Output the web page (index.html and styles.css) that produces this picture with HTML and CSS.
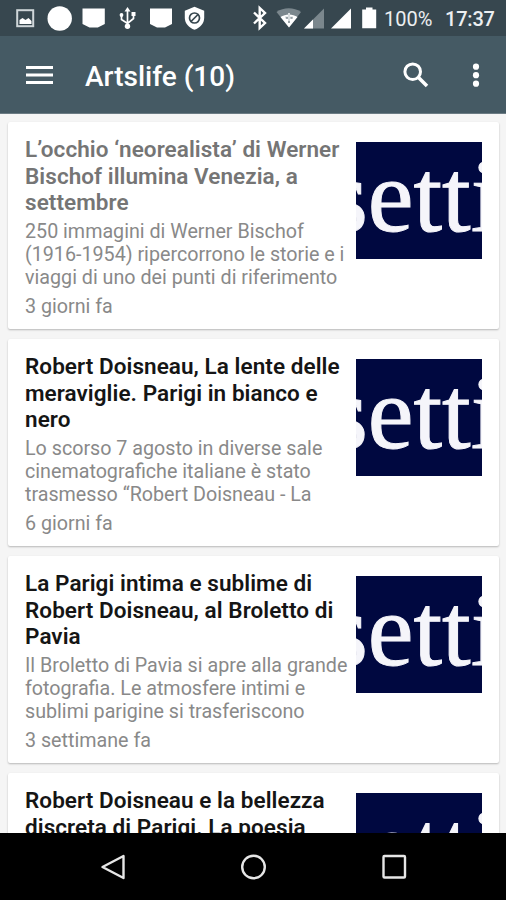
FILE: index.html
```html
<!DOCTYPE html>
<html lang="it">

<head>
    <meta charset="UTF-8">
    <meta name="viewport" content="width=device-width, initial-scale=1.0">
    <title>Artslife</title>
    <link rel="stylesheet" href="styles.css">
</head>

<body>
    <div class="screen">
        <div class="status-bar">
            <svg width="253" height="36" viewBox="0 0 253 36">
                <rect x="17.2" y="10.2" width="16" height="16" fill="none" stroke="#cfd6d9" stroke-width="2"/>
                <path d="M19.500 24v-4l3-2 3 2 3-2 3 3v3z" fill="#fff"/>
                <circle cx="59.700" cy="18.500" r="12.200" fill="#fff"/>
                <path d="M82.500 8.500h22.300v15.500l-7 3.500h-8.300l-7-3.500z" fill="#fff"/>
                <path d="M127.500 9v18M121.500 15v4.500l6 4 6-5V14" fill="none" stroke="#fff" stroke-width="1.700"/>
                <path d="M124.500 11.500l3-4.500 3 4.500z" fill="#fff"/>
                <circle cx="121.500" cy="15" r="1.900" fill="#fff"/>
                <path d="M131.500 12h4v4h-4z" fill="#fff"/>
                <circle cx="127.500" cy="26.300" r="2.700" fill="#fff"/>
                <path d="M150 8.500h22v15.500l-7 3.500h-8l-7-3.500z" fill="#fff"/>
                <path d="M194.500 6.800l9.700 4v7c0 5.500-4 10-9.700 12-5.700-2-9.700-6.500-9.700-12v-7z" fill="#fff"/>
                <circle cx="194.500" cy="18" r="5" fill="none" stroke="#37474f" stroke-width="1.700"/>
                <path d="M191 21.500l7-7" stroke="#37474f" stroke-width="1.700"/>
            </svg>
            <svg width="124" height="36" viewBox="253 0 124 36">
                <path d="M254 12.500l11 10.500-5.300 5V8l5.300 5-11 10.500" fill="none" stroke="#fff" stroke-width="2.400"/>
                <path d="M276.500 12c7-5 17.500-5 24.500 0L289 27.500z" fill="#7b878d"/>
                <path d="M280.500 17c5-3.500 12-3.500 17 0L289 27.500z" fill="#fff"/>
                <path d="M289 13v8M285 17.500h8" stroke="#d7dcde" stroke-width="2"/>
                <path d="M286 18h2M290.500 18h2M289 21v2" stroke="#59676e" stroke-width="1.200"/>
                <path d="M324 8.500v20h-20z" fill="#7b878d"/>
                <path d="M313 19.500v9h-9z" fill="#fff"/>
                <path d="M351 8.500v20h-20z" fill="#fff"/>
                <path d="M366 7.500h6.500v2h3.700v18.700h-14V9.500h3.800z" fill="#fff"/>
            </svg>
            <span class="battery">100%</span>
            <span class="clock">17:37</span>
        </div>

        <header class="toolbar">
            <svg class="menu" width="27" height="20" viewBox="0 0 27 20">
                <path d="M0 2.500h27M0 10h27M0 17.500h27" stroke="#fff" stroke-width="3.200"/>
            </svg>
            <h1>Artslife (10)</h1>
            <svg class="search" width="26" height="26" viewBox="0 0 26 26">
                <circle cx="9.700" cy="9.700" r="7.800" fill="none" stroke="#fff" stroke-width="3"/>
                <path d="M15.500 15.500l8.500 8.500" stroke="#fff" stroke-width="3.600"/>
            </svg>
            <svg class="more" width="8" height="26" viewBox="0 0 8 26">
                <circle cx="4" cy="4.700" r="3.100" fill="#fff"/>
                <circle cx="4" cy="13.200" r="3.100" fill="#fff"/>
                <circle cx="4" cy="21.700" r="3.100" fill="#fff"/>
            </svg>
        </header>

        <main class="list">
            <article class="card read">
                <div class="text">
                    <h2>L’occhio ‘neorealista’ di Werner<br>Bischof illumina Venezia, a<br>settembre</h2>
                    <p class="excerpt">250 immagini di Werner Bischof<br>(1916-1954) ripercorrono le storie e i<br>viaggi di uno dei punti di riferimento</p>
                    <p class="time">3 giorni fa</p>
                </div>
                <div class="thumb"><span>setti</span></div>
            </article>

            <article class="card">
                <div class="text">
                    <h2>Robert Doisneau, La lente delle<br>meraviglie. Parigi in bianco e<br>nero</h2>
                    <p class="excerpt">Lo scorso 7 agosto in diverse sale<br>cinematografiche italiane è stato<br>trasmesso “Robert Doisneau - La</p>
                    <p class="time">6 giorni fa</p>
                </div>
                <div class="thumb"><span>setti</span></div>
            </article>

            <article class="card">
                <div class="text">
                    <h2>La Parigi intima e sublime di<br>Robert Doisneau, al Broletto di<br>Pavia</h2>
                    <p class="excerpt">Il Broletto di Pavia si apre alla grande<br>fotografia. Le atmosfere intimi e<br>sublimi parigine si trasferiscono</p>
                    <p class="time">3 settimane fa</p>
                </div>
                <div class="thumb"><span>setti</span></div>
            </article>

            <article class="card">
                <div class="text">
                    <h2>Robert Doisneau e la bellezza<br>discreta di Parigi. La poesia</h2>
                </div>
                <div class="thumb"><span>setti</span></div>
            </article>
        </main>

        <nav class="nav-bar">
            <svg width="26" height="28" viewBox="0 0 26 28">
                <path d="M23.500 3v22L2.500 14z" fill="none" stroke="#e6e6e6" stroke-width="2.400" stroke-linejoin="round"/>
            </svg>
            <svg width="26" height="28" viewBox="0 0 26 28">
                <circle cx="13.500" cy="14" r="11.300" fill="none" stroke="#e6e6e6" stroke-width="2.400"/>
            </svg>
            <svg width="26" height="28" viewBox="0 0 26 28">
                <rect x="2.500" y="3" width="21.500" height="21.500" rx="1" fill="none" stroke="#e6e6e6" stroke-width="2.400"/>
            </svg>
        </nav>
    </div>
</body>

</html>
```

FILE: styles.css
```css
body {
    margin: 0;
    font-family: Roboto, "Liberation Sans", sans-serif;
}

.screen {
    display: flex;
    flex-direction: column;
    height: 900px;
    overflow: hidden;
    background-color: #f5f5f5;
}

.status-bar {
    display: flex;
    flex: none;
    height: 36px;
    background-color: #37474f;
    color: #eceff1;
    font-size: 20px;
    font-weight: 500;
    line-height: 38px;
    white-space: nowrap;
}

.status-bar svg {
    flex: none;
}

.battery {
    width: 61px;
    margin-left: 7px;
    font-weight: 400;
}

.clock {
    letter-spacing: -0.2px;
}

.toolbar {
    display: flex;
    flex: none;
    align-items: center;
    box-sizing: border-box;
    height: 78px;
    padding: 0 26px 0 26px;
    background-color: #455a64;
    border-bottom: 1px solid #6b7b83;
    color: #fff;
}

.toolbar h1 {
    flex: 1;
    margin: 3px 0 0 32px;
    font-size: 28px;
    font-weight: 500;
}

.search {
    margin-right: 43px;
}

.list {
    flex: 1;
    min-height: 0;
    padding: 8px 7px 0 8px;
    overflow: hidden;
}

.card {
    display: flex;
    justify-content: space-between;
    box-sizing: border-box;
    height: 207px;
    margin-bottom: 10px;
    padding: 14px 17px 0;
    background-color: #fff;
    border-radius: 2px;
    box-shadow: 0 1px 2px rgba(0, 0, 0, 0.25);
    white-space: nowrap;
}

.text {
    width: 324px;
}

.card h2 {
    margin: 0;
    color: #151515;
    font-size: 22.500px;
    font-weight: 600;
    line-height: 26.700px;
    letter-spacing: 0.06px;
}

.card p {
    margin: 0;
    color: #898989;
    font-size: 19.700px;
    line-height: 23px;
}

.card .excerpt {
    margin: 4px 0 6px;
}

.card.read h2 {
    color: #757575;
}

.thumb {
    display: flex;
    flex: none;
    justify-content: center;
    box-sizing: border-box;
    width: 126px;
    height: 117px;
    margin-top: 6px;
    padding-right: 11px;
    overflow: hidden;
    background-color: #000840;
    color: #f5f5fa;
    font-family: "Liberation Serif", serif;
    font-size: 103px;
    line-height: 109px;
    -webkit-text-stroke: 1px #f5f5fa;
}

.nav-bar {
    display: flex;
    flex: none;
    align-items: center;
    justify-content: center;
    gap: 114.500px;
    height: 67px;
    background-color: #000;
}
```
